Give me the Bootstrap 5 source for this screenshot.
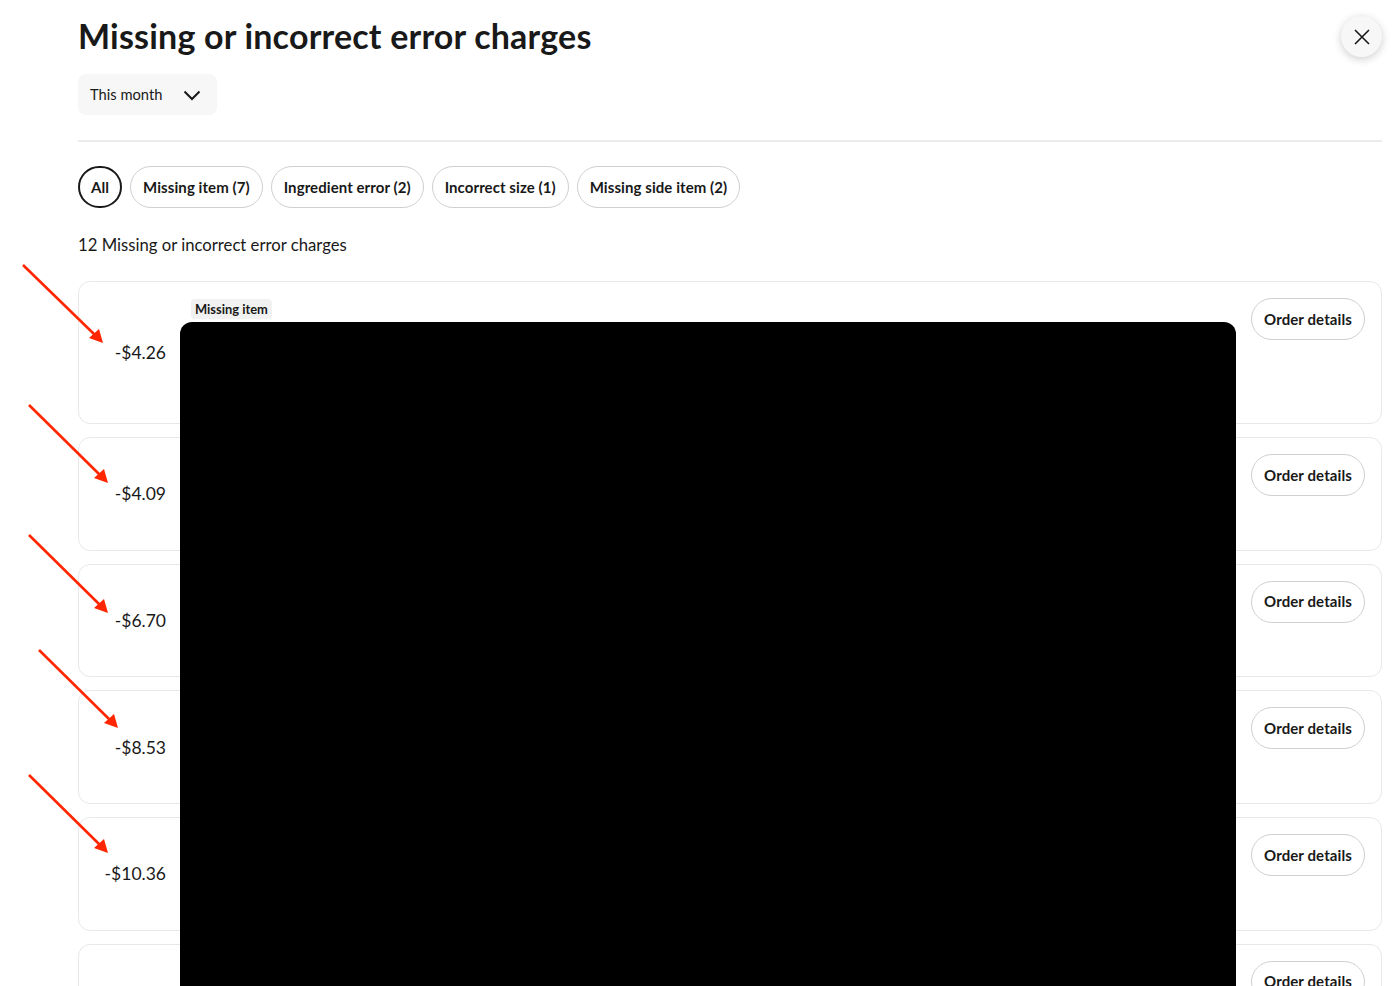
<!DOCTYPE html>
<html lang="en">
<head>
	<meta charset="UTF-8">
	<meta name="viewport" content="width=device-width, initial-scale=1.0">
	<title>Missing or incorrect error charges</title>
	<link href="https://cdn.jsdelivr.net/npm/bootstrap@5.3.0/dist/css/bootstrap.min.css" rel="stylesheet">
	<style>
		html, body { height: 986px; overflow: hidden; }
		body { font-family: Lato, "Liberation Sans", sans-serif; color: #191919; background: #fff; }
		.page-wrap { padding: 0 18px 0 78px; }
		.page-title { font-size: 34px; font-weight: 700; letter-spacing: .2px; line-height: 40px; margin: 0; padding-top: 16px; }
		.close-btn { position: absolute; left: 1341px; top: 16px; width: 41px; height: 41px; background: #f7f7f7; box-shadow: 0 2px 8px rgba(0,0,0,.2); }
		.range-btn { width: 139px; height: 41px; margin-top: 18px; padding: 0 16px 0 12px; background: #f7f7f7; border-radius: 8px; font-size: 14.7px; border: 0; color: #191919; }
		.page-rule { height: 2px; background: #ebebeb; margin: 25px 0 24px; opacity: 1; border: 0; }
		.chip { height: 42px; padding: 0 12px; font-size: 15px; font-weight: 700; letter-spacing: .075px; color: #191919; border: 1px solid #d0d0d0; background: #fff; }
		.chip-on { border: 2px solid #191919; padding: 0 11px; }
		.count-line { font-size: 16.7px; line-height: 24px; margin: 25px 0 24px; }
		.charge-card { height: 113.67px; margin-bottom: 13px; border: 1px solid #e8e8e8; border-radius: 12px; padding: 0 16px 0 0; }
		.charge-first { height: 143px; }
		.charge-amt { width: 87px; padding-top: 1px; font-size: 17.5px; text-align: right; }
		.charge-body { padding: 17px 0 0 25px; }
		.type-tag { background: #f1f1f1; border-radius: 4px; font-size: 12.9px; font-weight: 700; line-height: 20px; padding: 0 4px; vertical-align: top; }
		.details-btn { width: 114px; height: 42px; margin-top: 16px; padding: 0; font-size: 15px; font-weight: 700; letter-spacing: .1px; color: #191919; border: 1px solid #d0d0d0; background: #fff; }
		.redacted { position: absolute; left: 180px; top: 322px; width: 1056px; height: 664px; background: #000; border-radius: 12px 12px 0 0; }
		.arrows { position: absolute; left: 0; top: 0; }
	</style>
</head>
<body class="position-relative">
	<div class="page-wrap">
		<h1 class="page-title">Missing or incorrect error charges</h1>
		<button class="range-btn d-flex align-items-center justify-content-between" type="button">
			This month
			<svg width="18" height="18" viewBox="0 0 18 18" fill="none" stroke="#191919" stroke-width="2"><path d="M1.5 5.5l7.5 7.5 7.5-7.5"/></svg>
		</button>
		<hr class="page-rule">

		<div class="d-flex gap-2">
			<button class="btn rounded-pill chip chip-on" type="button">All</button>
			<button class="btn rounded-pill chip" type="button">Missing item (7)</button>
			<button class="btn rounded-pill chip" type="button">Ingredient error (2)</button>
			<button class="btn rounded-pill chip" type="button">Incorrect size (1)</button>
			<button class="btn rounded-pill chip" type="button">Missing side item (2)</button>
		</div>

		<p class="count-line">12 Missing or incorrect error charges</p>

		<div class="charge-card charge-first d-flex align-items-start">
			<div class="charge-amt align-self-center">-$4.26</div>
			<div class="charge-body flex-grow-1"><span class="type-tag d-inline-block">Missing item</span></div>
			<button class="btn rounded-pill details-btn" type="button">Order details</button>
		</div>
		<div class="charge-card d-flex align-items-start">
			<div class="charge-amt align-self-center">-$4.09</div>
			<div class="charge-body flex-grow-1"></div>
			<button class="btn rounded-pill details-btn" type="button">Order details</button>
		</div>
		<div class="charge-card d-flex align-items-start">
			<div class="charge-amt align-self-center">-$6.70</div>
			<div class="charge-body flex-grow-1"></div>
			<button class="btn rounded-pill details-btn" type="button">Order details</button>
		</div>
		<div class="charge-card d-flex align-items-start">
			<div class="charge-amt align-self-center">-$8.53</div>
			<div class="charge-body flex-grow-1"></div>
			<button class="btn rounded-pill details-btn" type="button">Order details</button>
		</div>
		<div class="charge-card d-flex align-items-start">
			<div class="charge-amt align-self-center">-$10.36</div>
			<div class="charge-body flex-grow-1"></div>
			<button class="btn rounded-pill details-btn" type="button">Order details</button>
		</div>
		<div class="charge-card d-flex align-items-start">
			<div class="charge-amt align-self-center"></div>
			<div class="charge-body flex-grow-1"></div>
			<button class="btn rounded-pill details-btn" type="button">Order details</button>
		</div>
	</div>

	<button class="close-btn btn rounded-circle d-flex align-items-center justify-content-center p-0" type="button" aria-label="Close">
		<svg width="16" height="16" viewBox="0 0 16 16" fill="none" stroke="#191919" stroke-width="1.6"><path d="M1 1l14 14M15 1L1 15"/></svg>
	</button>

	<div class="redacted"></div>

	<!-- red annotation arrows drawn on top of the screenshot -->
	<svg class="arrows" width="1400" height="986" fill="#ff2600" stroke="none">
		<g id="arrow-set"></g>
	</svg>

	<script src="https://cdn.jsdelivr.net/npm/bootstrap@5.3.0/dist/js/bootstrap.bundle.min.js"></script>
	<script>
		// start of each arrow; all of them share the same slope and head
		let starts = [[23, 265, 80, 78], [29, 405, 79, 78], [29, 535, 79, 78], [39, 650, 79, 78], [29, 775, 79, 78]];
		let html = "";
		starts.forEach(function (s) {
			let tx = s[0] + s[2], ty = s[1] + s[3];
			html += '<line x1="' + s[0] + '" y1="' + s[1] + '" x2="' + (tx - 8) + '" y2="' + (ty - 8) + '" stroke="#ff2600" stroke-width="2.6"/>';
			html += '<polygon points="' + tx + ',' + ty + ' ' + (tx - 14) + ',' + (ty - 5) + ' ' + (tx - 4) + ',' + (ty - 14) + '"/>';
		});
		document.getElementById("arrow-set").innerHTML = html;
	</script>
</body>
</html>
